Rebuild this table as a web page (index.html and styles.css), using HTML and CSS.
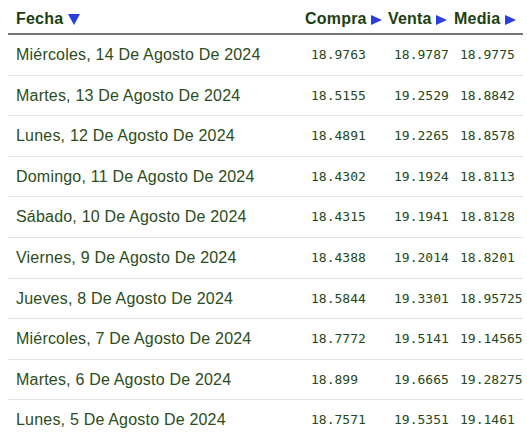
FILE: index.html
```html
<!DOCTYPE html>
<html lang="es">
<head>
  <meta charset="UTF-8" />
  <meta name="viewport" content="width=device-width, initial-scale=1.0"/>
  <title>Tipo de cambio</title>
  <link rel="stylesheet" href="styles.css">
</head>
<body>
  <div class="wrap">
    <table class="rates">
      <colgroup>
        <col class="col-date">
        <col class="col-buy">
        <col class="col-sell">
        <col class="col-mid">
      </colgroup>
      <thead>
        <tr>
          <th>Fecha <svg class="arrow" width="12" height="11" viewBox="0 0 12 11"><polygon points="0,0 12,0 6,11" /></svg></th>
          <th class="num">Compra <svg class="arrow" width="11" height="10" viewBox="0 0 11 10"><polygon points="0,0 11,5 0,10" /></svg></th>
          <th class="num">Venta <svg class="arrow" width="11" height="10" viewBox="0 0 11 10"><polygon points="0,0 11,5 0,10" /></svg></th>
          <th class="num">Media <svg class="arrow" width="11" height="10" viewBox="0 0 11 10"><polygon points="0,0 11,5 0,10" /></svg></th>
        </tr>
      </thead>
      <tbody>
        <tr><td>Miércoles, 14 De Agosto De 2024</td><td class="num">18.9763</td><td class="num">18.9787</td><td class="num">18.9775</td></tr>
        <tr><td>Martes, 13 De Agosto De 2024</td><td class="num">18.5155</td><td class="num">19.2529</td><td class="num">18.8842</td></tr>
        <tr><td>Lunes, 12 De Agosto De 2024</td><td class="num">18.4891</td><td class="num">19.2265</td><td class="num">18.8578</td></tr>
        <tr><td>Domingo, 11 De Agosto De 2024</td><td class="num">18.4302</td><td class="num">19.1924</td><td class="num">18.8113</td></tr>
        <tr><td>Sábado, 10 De Agosto De 2024</td><td class="num">18.4315</td><td class="num">19.1941</td><td class="num">18.8128</td></tr>
        <tr><td>Viernes, 9 De Agosto De 2024</td><td class="num">18.4388</td><td class="num">19.2014</td><td class="num">18.8201</td></tr>
        <tr><td>Jueves, 8 De Agosto De 2024</td><td class="num">18.5844</td><td class="num">19.3301</td><td class="num">18.95725</td></tr>
        <tr><td>Miércoles, 7 De Agosto De 2024</td><td class="num">18.7772</td><td class="num">19.5141</td><td class="num">19.14565</td></tr>
        <tr><td>Martes, 6 De Agosto De 2024</td><td class="num">18.899</td><td class="num">19.6665</td><td class="num">19.28275</td></tr>
        <tr><td>Lunes, 5 De Agosto De 2024</td><td class="num">18.7571</td><td class="num">19.5351</td><td class="num">19.1461</td></tr>
      </tbody>
    </table>
  </div>
</body>
</html>
```

FILE: styles.css
```css
* {
  margin: 0;
  padding: 0;
  box-sizing: border-box;
}

body {
  background: #ffffff;
  font-family: 'Liberation Sans', Arial, sans-serif;
  overflow: hidden;
}

.wrap {
  padding-left: 8px;
}

.rates {
  width: 515px;
  table-layout: fixed;
  border-collapse: collapse;
}

.col-date { width: 291px; }
.col-buy  { width: 83px; }
.col-sell { width: 66px; }
.col-mid  { width: 75px; }

.rates th {
  text-align: left;
  font-size: 16px;
  font-weight: bold;
  letter-spacing: 0.2px;
  line-height: 18px;
  color: #1d3f10;
  padding: 10px 0 5px 8px;
  border-bottom: 2px solid #777777;
  white-space: nowrap;
}

.rates th.num {
  padding-left: 6px;
}

.arrow {
  fill: #2b3fdc;
  vertical-align: -1px;
}

.rates td {
  font-size: 16px;
  letter-spacing: 0.2px;
  line-height: 18px;
  color: #2b4d1b;
  padding: 11px 0 10.6px 8px;
  border-bottom: 1px solid #e2e2e2;
  white-space: nowrap;
}

.rates td.num {
  font-family: 'DejaVu Sans Mono', 'Liberation Mono', monospace;
  font-size: 13px;
  letter-spacing: 0;
  color: #24481a;
  padding-left: 12px;
}
```
